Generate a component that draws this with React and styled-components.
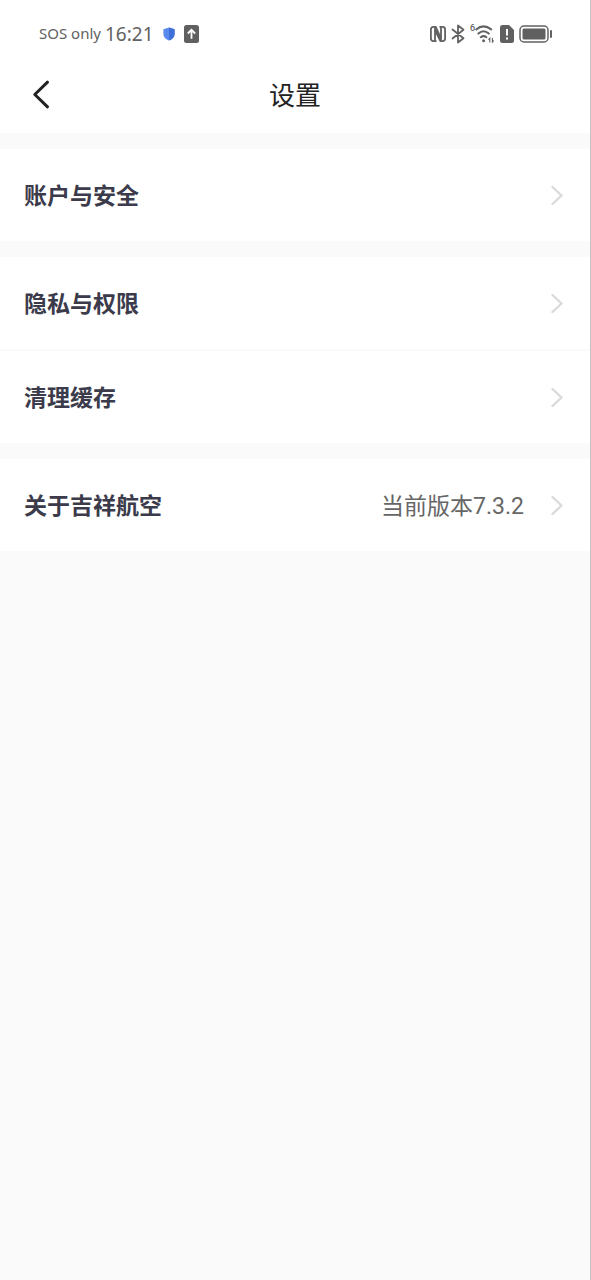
import React from "react";
import styled, { createGlobalStyle } from "styled-components";

const GlobalStyle = createGlobalStyle`
  * {
    box-sizing: border-box;
  }
  body {
    margin: 0;
    background: #fafafa;
    font-family: Roboto, "Noto Sans CJK SC", sans-serif;
  }
`;
const Page = styled.div`
  min-height: 100vh;
  border-right: 1px solid #c4c4c4;
  background: #fafafa;
`;
const TopArea = styled.header`
  background: #ffffff;
`;
const StatusBar = styled.div`
  display: flex;
  justify-content: space-between;
  align-items: center;
  height: 57px;
  padding: 10px 37px 0 39px;
  color: #626262;
`;
const StatusGroup = styled.div`
  display: flex;
  align-items: center;
  gap: ${(props) => props.$gap}px;
`;
const Carrier = styled.span`
  padding-bottom: 2px;
  font-family: "Noto Sans", sans-serif;
  font-size: 15px;
  line-height: 24px;
`;
const Clock = styled.span`
  margin-right: 4px;
  font-family: "Noto Sans", sans-serif;
  font-size: 19px;
  line-height: 24px;
`;
const WifiStatus = styled.div`
  display: flex;
  align-items: flex-start;
`;
const WifiGeneration = styled.span`
  width: 5px;
  font-size: 9px;
  font-weight: 500;
  line-height: 9px;
`;
const NavBar = styled.div`
  display: grid;
  grid-template-columns: 60px 1fr 60px;
  align-items: center;
  height: 76px;
  padding: 0 12px;
`;
const BackButton = styled.button`
  display: flex;
  align-items: center;
  height: 60px;
  padding: 0 20px;
  border: none;
  background: none;
  color: #222222;
  cursor: pointer;
`;
const Title = styled.h1`
  margin: 0;
  padding-top: 2px;
  color: #222222;
  font-size: 26px;
  font-weight: 400;
  line-height: 40px;
  text-align: center;
`;
const Sections = styled.main`
  display: flex;
  flex-direction: column;
  gap: 16px;
  padding-top: 16px;
`;
const Section = styled.section`
  display: flex;
  flex-direction: column;
  gap: 2px;
  background: #fafafa;
`;
const Row = styled.button`
  display: flex;
  align-items: center;
  width: 100%;
  height: 92px;
  padding: 0 26px 0 24px;
  border: none;
  background: #ffffff;
  font-family: inherit;
  font-size: 23px;
  line-height: 34px;
  text-align: left;
  cursor: pointer;
`;
const RowLabel = styled.span`
  flex: 1;
  padding-top: 4px;
  color: #3b3b4b;
  font-weight: 700;
`;
const RowValue = styled.span`
  margin-right: 26px;
  padding-top: 4px;
  color: #666666;
`;

const ShieldIcon = () => (
  <svg width="14" height="14" viewBox="0 0 14 14">
    <path d="M7 .5 12.6 2.3V7c0 3.2-2.4 5.3-5.6 6.5C3.8 12.3 1.4 10.2 1.4 7V2.3Z" fill="#5a8aec" />
    <path d="M7 .5 12.6 2.3V7c0 3.2-2.4 5.3-5.6 6.5Z" fill="#3f6fd8" />
  </svg>
);
const UploadIcon = () => (
  <svg width="15" height="18" viewBox="0 0 15 18">
    <rect width="15" height="18" rx="2.5" fill="#606060" />
    <path d="M7.5 13.8V5M3.8 8.5 7.5 4.8 11.2 8.5" fill="none" stroke="#fff" strokeWidth="1.8" />
  </svg>
);
const NfcIcon = () => (
  <svg width="16" height="16" viewBox="0 0 16 16" fill="none" stroke="currentColor" strokeWidth="1.8">
    <path d="M6.5 15.1H3.4Q.9 15.1 .9 12.6V3.4Q.9 .9 3.4 .9H5.5M9.5 .9H12.6Q15.1 .9 15.1 3.4V12.6Q15.1 15.1 12.6 15.1H10.5" />
    <path d="M5 15V4M11 12V1" />
    <path d="M4.1 0H6.3L11.9 12V16H9.9L4.1 4.5Z" fill="currentColor" stroke="none" />
  </svg>
);
const BluetoothIcon = () => (
  <svg width="14" height="20" viewBox="0 0 14 20" fill="none" stroke="currentColor" strokeWidth="1.8" strokeLinejoin="round" strokeLinecap="round">
    <path d="M1.5 5.5 12.5 14.2 7 18.5V1.5L12.5 5.8 1.5 14.5" />
  </svg>
);
const WifiIcon = () => (
  <svg width="20" height="20" viewBox="5 0 20 20" fill="none" stroke="currentColor" strokeLinecap="round">
    <path d="M6.2 5.4Q13.5-.6 21.2 5.4M8.4 9.6Q13.5 5 18.8 9.6M10.8 13.2Q13.5 11 16.4 13.2" strokeWidth="2" />
    <circle cx="13.6" cy="16.8" r="1.5" fill="currentColor" stroke="none" />
    <path d="M19.8 18V14.2L18.8 15.4M22.4 14.2V18L23.4 16.8" strokeWidth="1.1" />
  </svg>
);
const SimAlertIcon = () => (
  <svg width="14" height="18" viewBox="0 0 14 18">
    <path d="M2.5 0H9L14 5V15.5Q14 18 11.5 18H2.5Q0 18 0 15.5V2.5Q0 0 2.5 0Z" fill="#606060" />
    <path d="M7 4V10.5M7 12.5V14.5" stroke="#fff" strokeWidth="2" />
  </svg>
);
const BatteryIcon = () => (
  <svg width="34" height="18" viewBox="0 0 34 18">
    <rect x="1" y="1" width="28" height="16" rx="4" fill="none" stroke="currentColor" strokeWidth="1.5" />
    <rect x="3.5" y="3.5" width="23" height="11" rx="1.5" fill="#606060" />
    <path d="M32 6V12" stroke="currentColor" strokeWidth="2" strokeLinecap="round" />
  </svg>
);
const BackIcon = () => (
  <svg width="20" height="30" viewBox="0 0 20 30" fill="none" stroke="currentColor" strokeWidth="3" strokeLinecap="round" strokeLinejoin="round">
    <path d="M15.5 2.2 2.8 14.5 15.5 26.8" />
  </svg>
);
const ArrowIcon = () => (
  <svg width="14" height="20" viewBox="0 0 14 20" fill="none" stroke="#dadada" strokeWidth="2.4" strokeLinecap="round" strokeLinejoin="round">
    <path d="M2.5 2 11.5 10.5 2.5 19" />
  </svg>
);

const sections = [
  [{ label: "账户与安全" }],
  [{ label: "隐私与权限" }, { label: "清理缓存" }],
  [{ label: "关于吉祥航空", value: "当前版本7.3.2" }],
];

const App = () => {
  return (
    <>
      <GlobalStyle />
      <Page>
        <TopArea>
          <StatusBar>
            <StatusGroup $gap={4}>
              <Carrier>SOS only</Carrier>
              <Clock>16:21</Clock>
              <StatusGroup $gap={8}>
                <ShieldIcon />
                <UploadIcon />
              </StatusGroup>
            </StatusGroup>
            <StatusGroup $gap={5}>
              <NfcIcon />
              <BluetoothIcon />
              <WifiStatus>
                <WifiGeneration>6</WifiGeneration>
                <WifiIcon />
              </WifiStatus>
              <SimAlertIcon />
              <BatteryIcon />
            </StatusGroup>
          </StatusBar>
          <NavBar>
            <BackButton aria-label="返回">
              <BackIcon />
            </BackButton>
            <Title>设置</Title>
          </NavBar>
        </TopArea>
        <Sections>
          {sections.map((rows) => (
            <Section key={rows[0].label}>
              {rows.map((row) => (
                <Row key={row.label}>
                  <RowLabel>{row.label}</RowLabel>
                  {row.value && <RowValue>{row.value}</RowValue>}
                  <ArrowIcon />
                </Row>
              ))}
            </Section>
          ))}
        </Sections>
      </Page>
    </>
  );
};

export default App;
